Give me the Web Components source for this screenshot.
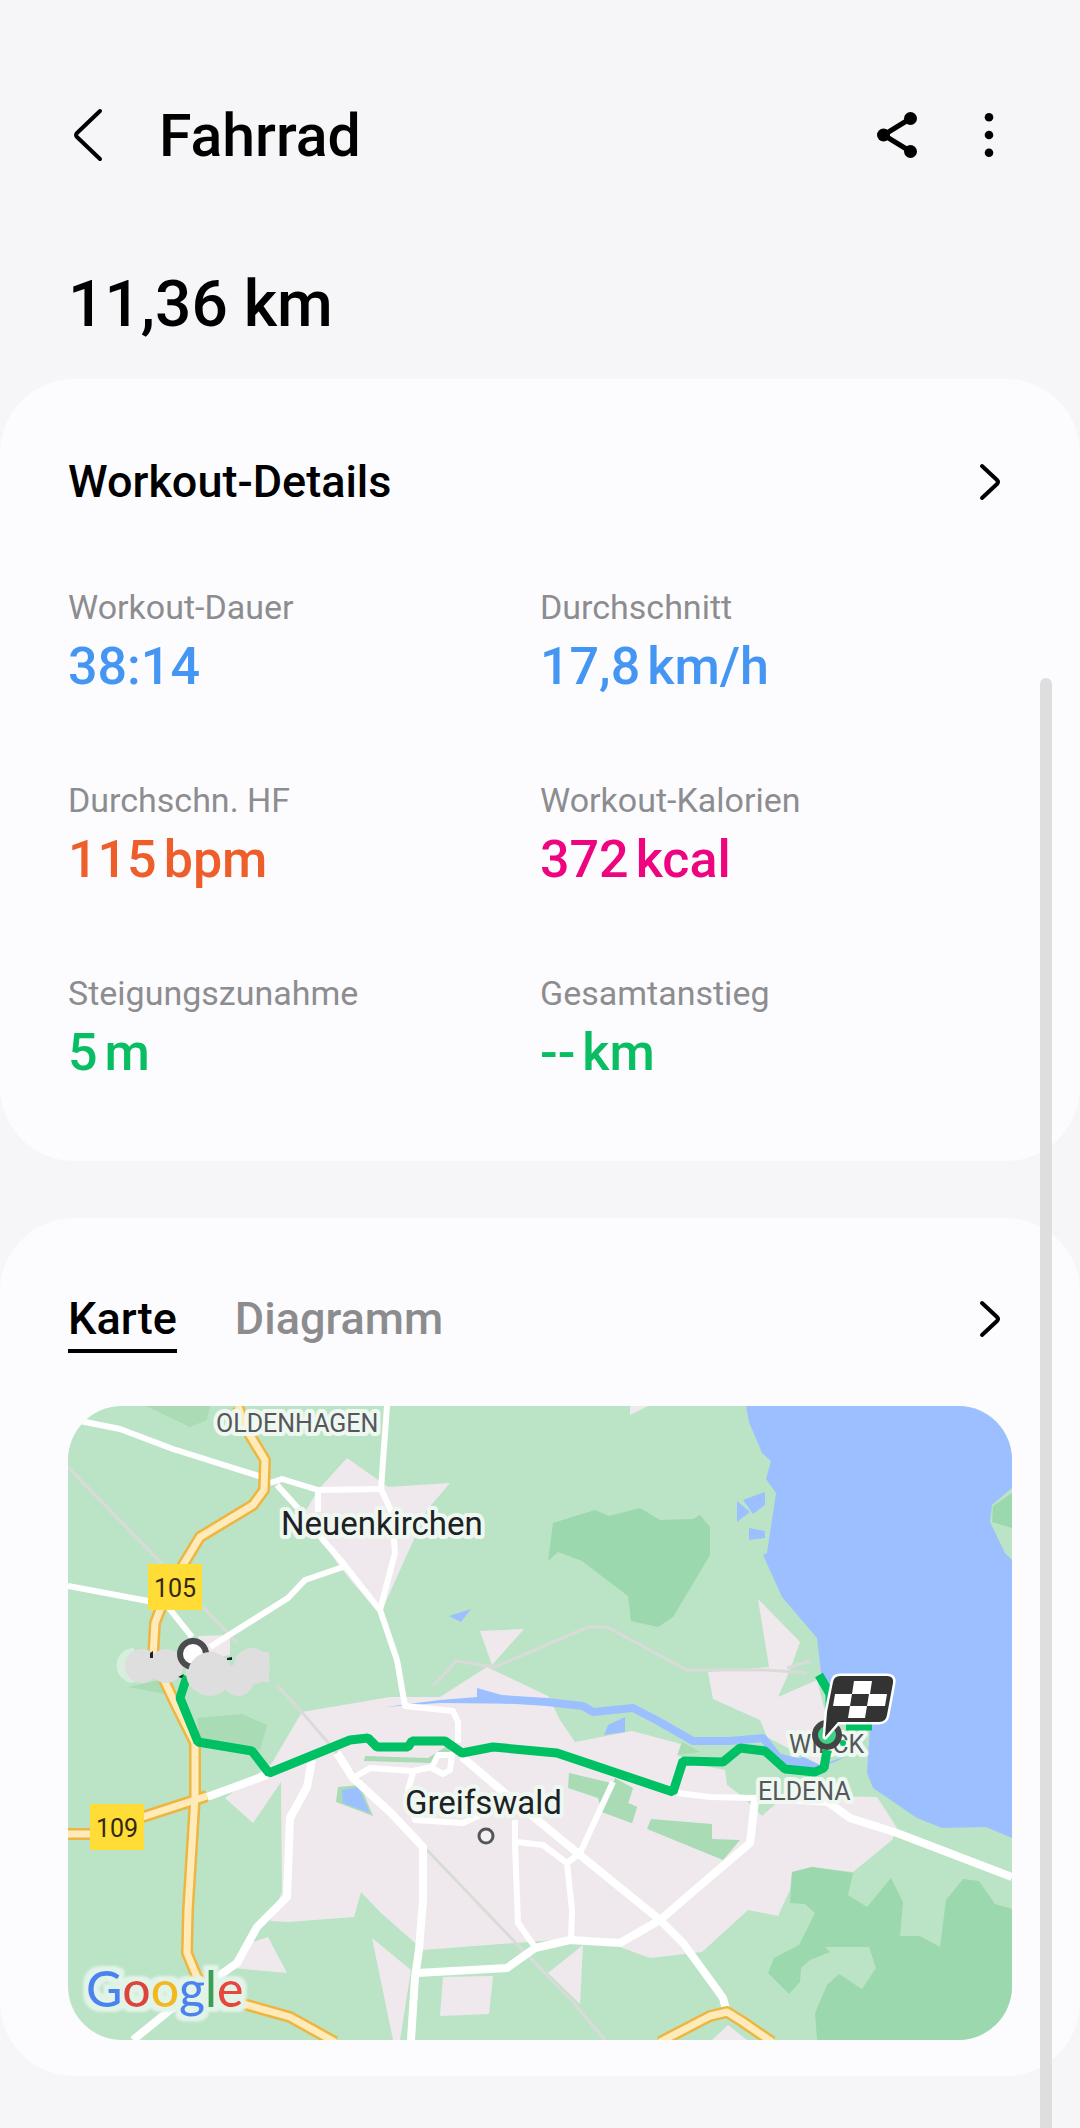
<!DOCTYPE html>
<html lang="de">
<head>
<meta charset="UTF-8">
<meta name="viewport" content="width=device-width, initial-scale=1.0">
<title>Fahrrad</title>
<style>
    body {
        margin: 0;
        background: #f6f6f8;
        color: #000;
        font-family: Roboto, "Noto Sans", sans-serif;
    }
</style>
</head>
<body>
<workout-page>
    <workout-header>Fahrrad</workout-header>
    <workout-distance>11,36 km</workout-distance>

    <workout-card>
        <card-heading>Workout-Details</card-heading>
        <stat-grid>
            <stat-item label="Workout-Dauer" value="38:14" color="#4596f3"></stat-item>
            <stat-item label="Durchschnitt" value="17,8" unit="km/h" color="#4596f3"></stat-item>
            <stat-item label="Durchschn. HF" value="115" unit="bpm" color="#ee5e2a"></stat-item>
            <stat-item label="Workout-Kalorien" value="372" unit="kcal" color="#ee047e"></stat-item>
            <stat-item label="Steigungszunahme" value="5" unit="m" color="#09bd63"></stat-item>
            <stat-item label="Gesamtanstieg" value="--" unit="km" color="#09bd63"></stat-item>
        </stat-grid>
    </workout-card>

    <workout-card class="map-card">
        <card-tabs tabs="Karte,Diagramm"></card-tabs>
        <route-map></route-map>
    </workout-card>
</workout-page>

<script>
class WorkoutPage extends HTMLElement {
    connectedCallback() {
        this.attachShadow({ mode: 'open' });
        this.shadowRoot.innerHTML = `
        <style>
            :host {
                display: block;
                position: relative;
                min-height: 100vh;
            }

            ::slotted(.map-card) {
                margin-top: 57px;
                padding-bottom: 36px;
            }

            /* Scroll thumb, lies over the cards */
            .thumb {
                position: absolute;
                top: 678px;
                right: 28px;
                bottom: 0;
                width: 12px;
                border-radius: 6px 6px 0 0;
                background: #dededf;
            }
        </style>
        <main><slot></slot></main>
        <div class="thumb"></div>
        `;
    }
}

class WorkoutHeader extends HTMLElement {
    connectedCallback() {
        this.attachShadow({ mode: 'open' });
        this.shadowRoot.innerHTML = `
        <style>
            :host {
                display: flex;
                align-items: center;
                padding: 100px 68px 0;
            }

            button {
                display: block;
                width: 48px;
                height: 72px;
                padding: 0;
                border: 0;
                background: none;
                color: inherit;
                cursor: pointer;
            }

            svg {
                display: block;
            }

            h1 {
                flex: 1;
                margin: 0 0 0 43px;
                font-size: 59px;
                font-weight: 500;
                line-height: 72px;
            }

            .actions {
                display: flex;
                gap: 43px;
            }
        </style>

        <button aria-label="Zurück">
            <svg width="48" height="72" viewBox="0 0 48 72" fill="none" stroke="currentColor" stroke-width="4" stroke-linecap="round" stroke-linejoin="round">
                <path d="M32 11 9 33q-2 2 0 4l23 22"/>
            </svg>
        </button>
        <h1><slot></slot></h1>
        <div class="actions">
            <button aria-label="Teilen">
                <svg width="48" height="72" viewBox="0 0 48 72" fill="currentColor">
                    <path d="M37.5 18.5 10.5 35 37.5 51.5" fill="none" stroke="currentColor" stroke-width="5"/>
                    <circle cx="37.5" cy="18.5" r="6.5"/>
                    <circle cx="10.5" cy="35" r="6.5"/>
                    <circle cx="37.5" cy="51.5" r="6.5"/>
                </svg>
            </button>
            <button aria-label="Weitere Optionen">
                <svg width="48" height="72" viewBox="0 0 48 72" fill="currentColor">
                    <circle cx="25" cy="17.3" r="4.3"/>
                    <circle cx="25" cy="35" r="4.3"/>
                    <circle cx="25" cy="52.7" r="4.3"/>
                </svg>
            </button>
        </div>
        `;
    }
}

class WorkoutDistance extends HTMLElement {
    connectedCallback() {
        this.attachShadow({ mode: 'open' });
        this.shadowRoot.innerHTML = `
        <style>
            :host {
                display: block;
                padding: 93px 68px 34px;
                font-size: 64px;
                font-weight: 500;
                line-height: 80px;
            }
        </style>
        <slot></slot>
        `;
    }
}

class WorkoutCard extends HTMLElement {
    connectedCallback() {
        this.attachShadow({ mode: 'open' });
        this.shadowRoot.innerHTML = `
        <style>
            :host {
                display: block;
                padding: 75px 68px 76px;
                border-radius: 74px;
                background: #fcfcff;
            }
        </style>
        <section><slot></slot></section>
        `;
    }
}

class ArrowButton extends HTMLElement {
    connectedCallback() {
        this.attachShadow({ mode: 'open' });
        this.shadowRoot.innerHTML = `
        <style>
            :host {
                display: block;
            }

            button {
                display: block;
                padding: 0;
                border: 0;
                background: none;
                color: inherit;
                cursor: pointer;
            }

            svg {
                display: block;
            }
        </style>
        <button aria-label="Öffnen">
            <svg width="40" height="52" viewBox="0 0 40 52" fill="none" stroke="currentColor" stroke-width="4" stroke-linecap="round" stroke-linejoin="round">
                <path d="M10 10 25 24q2 2 0 4L10 42"/>
            </svg>
        </button>
        `;
    }
}

class CardHeading extends HTMLElement {
    connectedCallback() {
        this.attachShadow({ mode: 'open' });
        this.shadowRoot.innerHTML = `
        <style>
            :host {
                display: flex;
                align-items: center;
                justify-content: space-between;
            }

            h2 {
                margin: 0;
                font-size: 45px;
                font-weight: 500;
                line-height: 56px;
            }
        </style>
        <h2><slot></slot></h2>
        <arrow-button></arrow-button>
        `;
    }
}

class StatGrid extends HTMLElement {
    connectedCallback() {
        this.attachShadow({ mode: 'open' });
        this.shadowRoot.innerHTML = `
        <style>
            :host {
                display: grid;
                grid-template-columns: 1fr 1fr;
                row-gap: 79px;
                margin-top: 75px;
            }
        </style>
        <slot></slot>
        `;
    }
}

class StatItem extends HTMLElement {
    connectedCallback() {
        const unit = this.getAttribute('unit');
        this.attachShadow({ mode: 'open' });
        this.shadowRoot.innerHTML = `
        <style>
            :host {
                display: flex;
                flex-direction: column;
                gap: 6px;
            }

            .label {
                color: #8d8d90;
                font-size: 34px;
                line-height: 44px;
            }

            .value {
                display: flex;
                gap: 7px;
                color: ${this.getAttribute('color')};
                font-size: 52px;
                font-weight: 500;
                line-height: 64px;
            }
        </style>
        <span class="label">${this.getAttribute('label')}</span>
        <span class="value">
            <span>${this.getAttribute('value')}</span>
            ${unit ? `<span>${unit}</span>` : ''}
        </span>
        `;
    }
}

class CardTabs extends HTMLElement {
    connectedCallback() {
        const tabs = this.getAttribute('tabs').split(',');
        this.attachShadow({ mode: 'open' });
        this.shadowRoot.innerHTML = `
        <style>
            :host {
                display: flex;
                align-items: flex-start;
                justify-content: space-between;
            }

            .tabs {
                display: flex;
                gap: 58px;
            }

            .tab {
                padding: 0 0 4px;
                border: 0;
                border-bottom: 4px solid transparent;
                background: none;
                color: #8c8c8e;
                font: inherit;
                font-size: 45px;
                font-weight: 500;
                line-height: 52px;
                cursor: pointer;
            }

            .tab[aria-selected="true"] {
                border-color: #000;
                color: #000;
            }
        </style>
        <div class="tabs" role="tablist">
            ${tabs.map((tab, i) => `<button class="tab" role="tab" aria-selected="${i === 0}">${tab}</button>`).join('')}
        </div>
        <arrow-button></arrow-button>
        `;

        const buttons = this.shadowRoot.querySelectorAll('.tab');
        buttons.forEach(button => {
            button.addEventListener('click', () => {
                buttons.forEach(other => other.setAttribute('aria-selected', other === button));
            });
        });
    }
}

class RouteMap extends HTMLElement {
    connectedCallback() {
        this.attachShadow({ mode: 'open' });
        this.shadowRoot.innerHTML = `
        <style>
            :host {
                display: block;
                margin-top: 53px;
                border-radius: 54px;
                overflow: hidden;
            }

            svg {
                display: block;
                width: 100%;
                height: auto;
            }

            .land { fill: #bbe4c6; }
            .park { fill: #a9dbb5; }
            .wood { fill: #9bd8ae; }
            .town { fill: #efe9ee; }
            .water { fill: #9cc0ff; }

            .road, .lane, .track, .trunk-edge, .trunk, .route, .river {
                fill: none;
                stroke-linejoin: round;
            }

            .road { stroke: #fff; stroke-width: 8; }
            .lane { stroke: #fff; stroke-width: 6; }
            .track { stroke: #dadbd8; stroke-width: 3; }
            .trunk-edge { stroke: #eeb540; stroke-width: 12; }
            .trunk { stroke: #ffebba; stroke-width: 7; }
            .river { stroke: #9cc0ff; stroke-width: 8; }
            .route { stroke: #00c064; stroke-width: 9; stroke-linejoin: bevel; }

            text {
                font-family: Roboto, sans-serif;
                paint-order: stroke;
                stroke: #eef8f1;
                stroke-width: 8;
                stroke-linejoin: round;
            }

            .city { font-size: 33px; fill: #202124; }
            .district { font-size: 25px; fill: #55575b; }
            .shield { fill: #ffdc36; }
            .number { font-size: 25px; fill: #30290e; stroke: none; text-anchor: middle; }
            .brand { font-family: Lato, sans-serif; font-size: 50px; font-weight: 500; stroke: none; }
        </style>

        <svg viewBox="68 1406 944 634" role="img" aria-label="Karte der Route">
            <defs>
                <!-- One halo behind the whole word, so that no letter's halo covers its neighbour -->
                <filter id="halo" x="-10%" y="-20%" width="120%" height="140%">
                    <feMorphology in="SourceAlpha" operator="dilate" radius="5" result="wide"/>
                    <feGaussianBlur in="wide" stdDeviation="1" result="soft"/>
                    <feFlood flood-color="#e2f3e7"/>
                    <feComposite in2="soft" operator="in" result="glow"/>
                    <feMerge>
                        <feMergeNode in="glow"/>
                        <feMergeNode in="SourceGraphic"/>
                    </feMerge>
                </filter>
            </defs>

            <rect class="land" x="68" y="1406" width="944" height="634"/>

            <!-- Sea and the far shore -->
            <path class="water" d="M746 1406 749 1422 762 1453 771 1461 766 1479 776 1493 767 1553 763 1555 782 1597 817 1638 821 1673 840 1700 870 1727 867 1773 873 1788 917 1818 942 1828 986 1827 1012 1838V1406Z"/>
            <path class="land" d="M1012 1488 992 1505 990 1522 1005 1553 1012 1560Z"/>
            <path class="wood" d="M1012 1493 993 1506 992 1522 1012 1528Z"/>
            <path class="water" d="M737 1501 750 1512 737 1522ZM743 1500 765 1492V1505L753 1514ZM749 1528 765 1531V1538L749 1540Z"/>

            <!-- Woods and parks -->
            <path class="park" d="M146 1406H210L207 1420 190 1427ZM197 1718 242 1714 267 1725 260 1750 200 1742ZM128 1687 160 1680 176 1696Z"/>
            <path class="wood" d="M553 1523 595 1510 609 1516 640 1508 660 1520 693 1519 700 1515 710 1527V1555L673 1617 658 1627 631 1621 628 1596 582 1561 558 1552 548 1561Z"/>

            <!-- Built-up areas -->
            <path class="town" d="M347 1458 388 1487 450 1483 427 1510 383 1608 378 1612 353 1583 337 1563 305 1512 318 1490Z"/>
            <path class="town" d="M198 1636 230 1635V1655L205 1660ZM630 1406H648L630 1415ZM480 1631 524 1629 492 1665Z"/>
            <path class="town" d="M302 1712 390 1697H440L487 1667 548 1696 560 1720 575 1742 632 1731 681 1744 677 1755 700 1765 725 1770 727 1785 743 1797 762 1816 780 1800 830 1796 877 1797 897 1828 892 1840 853 1872 812 1867 792 1872 790 1890 778 1916 748 1910 702 1952 650 1958 593 1937 423 1950 380 1912 361 1892 354 1917 288 1922 270 1921 282 1892 281 1782 253 1823 225 1798 272 1763Z"/>
            <path class="town" d="M758 1599 800 1642 790 1670 778 1697 817 1680 828 1723 820 1765 767 1737 760 1720 713 1699 708 1672 769 1667Z"/>
            <path class="town" d="M268 1937 287 1973 233 1968 250 1943ZM372 1938 411 1970 400 2040H393ZM443 1977 493 1976 489 2014 440 2016ZM583 1945 580 2004 548 1973ZM728 2025 747 2040H712Z"/>

            <path class="park" d="M569 1773 633 1788 628 1803 637 1807 632 1823 602 1812 598 1798 568 1788ZM651 1819 712 1824V1839L740 1840 723 1860 647 1829ZM682 1742 700 1752 678 1755Z"/>
            <path class="park" d="M615 1778 633 1788 628 1803 637 1807 632 1823 602 1812Z"/>
            <path class="park" d="M365 1756 428 1758 447 1746 452 1750 432 1763 364 1761Z"/>
            <path class="park" d="M338 1787 360 1785 373 1816 336 1802Z"/>
            <path class="wood" d="M792 1872 812 1867 853 1873 848 1895 867 1907 891 1878 903 1902 900 1936H920L940 1947 946 1900 963 1879 979 1881 995 1904 1012 1909V2040H817L815 2013 827 1985 839 1974 862 1989 876 1968 869 1947H825L830 1952 810 1960 801 1968 800 1982 789 1994 768 1973 774 1958 799 1945 815 1913 805 1904 790 1903Z"/>

            <!-- River and ponds -->
            <path class="water" d="M385 1707 440 1700 477 1697V1688L502 1695 547 1700V1704L440 1703Z"/>
            <path class="river" d="M500 1699 547 1702 583 1706 593 1712 633 1708 658 1721 693 1741 730 1741 763 1738 778 1757 800 1763"/>
            <path class="water" d="M449 1616 471 1609 461 1622ZM625 1717 608 1725 604 1735 625 1732ZM342 1790 358 1787 370 1813 343 1803ZM783 1763 803 1757 820 1765 847 1756 835 1762 810 1770Z"/>

            <path class="track" d="M68 1467 163 1565 203 1607 237 1643M277 1685 307 1718 360 1780M427 1850 513 1940 573 2002 605 2040"/>
            <path class="track" d="M433 1686 456 1661 495 1667 588 1627H607L687 1670 767 1670 807 1673M787 1668 810 1661"/>

            <path class="lane" d="M68 1418 80 1421 120 1429 173 1449 262 1477M270 1483 282 1479 318 1490 380 1489"/>
            <path class="lane" d="M387 1406 381 1489 392 1513 395 1553 380 1610 397 1660 405 1706 453 1711 458 1722V1743"/>
            <path class="lane" d="M277 1485 297 1507 323 1540 343 1563 379 1609M318 1490V1512M343 1567 305 1580 288 1598 210 1647"/>
            <path class="lane" d="M68 1586 148 1601 168 1607 192 1637"/>
            <path class="lane" d="M353 1778 370 1768 413 1771 432 1767 438 1755H452L450 1770 443 1774 432 1768M413 1773 408 1790 415 1820 463 1823 480 1815"/>
            <path class="lane" d="M515 1820V1843L518 1923 535 1947M517 1842 543 1845 567 1863 572 1910 571 1940M567 1863 580 1853 613 1782"/>
            <path class="road" d="M207 1797 267 1775M312 1760 307 1787 290 1818 287 1897 257 1927 237 1963 203 1987 170 2010 133 2040"/>
            <path class="road" d="M337 1753 353 1778 390 1812 423 1847V1900L419 1950 415 1977 411 2040"/>
            <path class="road" d="M462 1757 513 1800 580 1855 660 1920 683 1943 710 1980 723 1998 727 2013"/>
            <path class="road" d="M417 1973 507 1968 535 1948 570 1940 620 1943 660 1920 710 1877 750 1843 755 1800"/>
            <path class="lane" d="M677 1793 710 1797 755 1798 830 1803"/>
            <path class="road" d="M825 1800 850 1818 897 1833 1012 1877"/>

            <path class="trunk-edge" d="M68 1834H90L195 1800 207 1796M238 1406 245 1427 265 1460 264 1490 253 1505 200 1537 183 1565 160 1610 155 1623 153 1657 177 1707 195 1743V1797L188 1910 187 1953 197 1977 210 1990 240 2003 290 2017 335 2042M660 2042 710 2016 727 2012 743 2022 772 2042"/>
            <path class="trunk" d="M68 1834H90L195 1800 207 1796M238 1406 245 1427 265 1460 264 1490 253 1505 200 1537 183 1565 160 1610 155 1623 153 1657 177 1707 195 1743V1797L188 1910 187 1953 197 1977 210 1990 240 2003 290 2017 335 2042M660 2042 710 2016 727 2012 743 2022 772 2042"/>

            <rect class="shield" x="148" y="1564" width="54" height="46"/>
            <text class="number" x="175" y="1597">105</text>
            <rect class="shield" x="90" y="1804" width="54" height="46"/>
            <text class="number" x="117" y="1837">109</text>

            <text class="district" x="216" y="1432">OLDENHAGEN</text>
            <text class="city" x="281" y="1535">Neuenkirchen</text>
            <text class="city" x="405" y="1814">Greifswald</text>
            <text class="district" x="789" y="1753">WIECK</text>
            <text class="district" x="758" y="1800">ELDENA</text>
            <circle cx="486" cy="1836" r="7" fill="#f4f1f4" stroke="#55555a" stroke-width="3"/>

            <path class="route" d="M187 1676 180 1698 198 1742 252 1751 269 1773 350 1740 368 1738 377 1747H408L412 1741H445L462 1753 493 1747 557 1753 673 1792 683 1761 723 1762 740 1748 765 1751 785 1769 815 1772 824 1768 827 1750"/>
            <path class="route" d="M819 1675 830 1694V1715M846 1726H872"/>
            <circle cx="843" cy="1743" r="3" fill="#00c064"/>

            <!-- Start -->
            <path d="M134 1648V1683A17 17 0 0 1 134 1648Z" fill="#d6eedc"/>
            <path d="M187 1666H192V1676H188Z" fill="#202124"/>
            <g fill="#dedede">
                <path d="M134 1650H143V1682H134Z"/>
                <circle cx="142" cy="1666" r="17"/>
                <circle cx="166" cy="1666" r="17"/>
                <circle cx="208" cy="1673" r="22"/>
                <circle cx="238" cy="1680" r="16"/>
                <circle cx="252" cy="1666" r="18"/>
                <path d="M250 1652H269V1682H250Z"/>
            </g>
            <circle cx="193" cy="1654" r="13" fill="#fff" stroke="#4b4c4e" stroke-width="6"/>
            <circle cx="210" cy="1674" r="22" fill="#dedede"/>
            <path d="M150 1653 153 1651V1658H150ZM178 1677 184 1674 182 1678ZM227 1658 232 1657V1660H227Z" fill="#202124"/>

            <!-- Finish -->
            <circle cx="827" cy="1735" r="12" fill="#3bd486" stroke="#434446" stroke-width="6"/>
            <path d="M840 1676H887Q894 1676 893 1683L887 1715Q886 1722 879 1722H838L825 1737 827 1712 833 1682Q834 1676 840 1676Z" fill="#333" stroke="#fff" stroke-width="5" paint-order="stroke" stroke-linejoin="round"/>
            <path d="M854 1681H872L870 1694H852ZM835 1694H852L850 1706H833ZM869 1694H887L885 1706H867ZM850 1706H867L865 1718H848Z" fill="#fff"/>

            <text class="brand" x="86" y="2007" filter="url(#halo)"><tspan fill="#4a83ee">G</tspan><tspan fill="#dc453a">o</tspan><tspan fill="#f2b91c">o</tspan><tspan fill="#4a83ee">g</tspan><tspan fill="#3ba055">l</tspan><tspan fill="#e8453a">e</tspan></text>
        </svg>
        `;
    }
}

customElements.define('workout-page', WorkoutPage);
customElements.define('workout-header', WorkoutHeader);
customElements.define('workout-distance', WorkoutDistance);
customElements.define('workout-card', WorkoutCard);
customElements.define('arrow-button', ArrowButton);
customElements.define('card-heading', CardHeading);
customElements.define('stat-grid', StatGrid);
customElements.define('stat-item', StatItem);
customElements.define('card-tabs', CardTabs);
customElements.define('route-map', RouteMap);
</script>
</body>
</html>
